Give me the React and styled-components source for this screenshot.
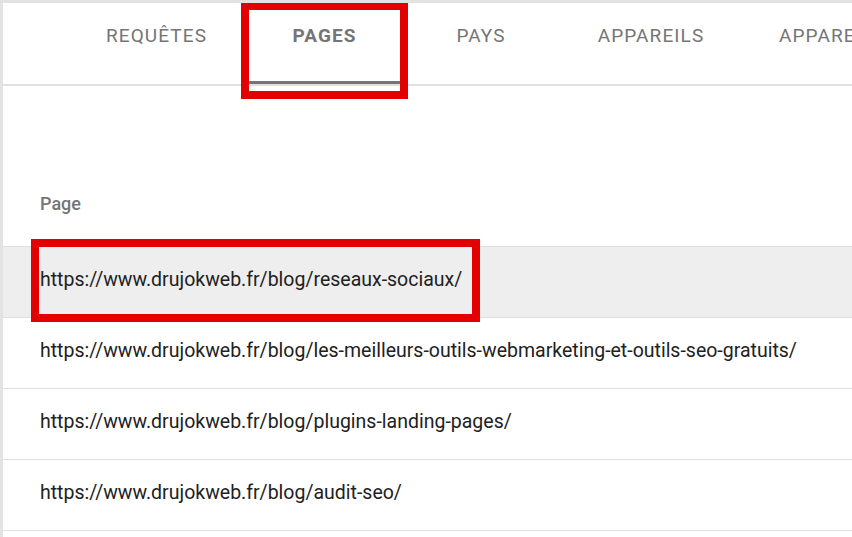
import React from 'react';
import styled, { createGlobalStyle } from 'styled-components';

const GlobalStyle = createGlobalStyle`
  html, body {
    margin: 0;
    padding: 0;
    background: #ffffff;
  }

  body {
    font-family: Roboto, 'Liberation Sans', Arial, sans-serif;
  }
`;

const colors = {
  line: '#e0e0e0',
  frame: '#e3e3e3',
  muted: '#757575',
  text: '#212121',
  hover: '#eeeeee',
  mark: '#e30000',
};

const Frame = styled.div`
  height: 537px;
  box-sizing: border-box;
  border-top: 3px solid ${colors.frame};
  border-left: 3px solid ${colors.frame};
  overflow: hidden;
`;

const TabBar = styled.div`
  display: flex;
  height: 81px;
  padding-left: 61px;
  border-bottom: 2px solid ${colors.line};
  white-space: nowrap;
`;

const Tab = styled.div`
  position: relative;
  flex: ${(p) => (p.$width ? `0 0 ${p.$width}px` : '0 0 auto')};
  display: flex;
  justify-content: center;
  align-items: flex-start;
  box-sizing: border-box;
  padding: 21px ${(p) => (p.$width ? 0 : 39)}px 0;
  font-size: 19px;
  line-height: 24px;
  font-weight: ${(p) => (p.$active ? 700 : 400)};
  letter-spacing: 1.1px;
  text-transform: uppercase;
  color: ${colors.muted};

  ${(p) =>
    p.$active &&
    `
    &::after {
      content: '';
      position: absolute;
      left: 0;
      right: 0;
      bottom: 0;
      height: 3px;
      background: ${colors.muted};
    }
  `}
`;

const Mark = styled.span`
  position: absolute;
  top: ${(p) => p.$top}px;
  right: ${(p) => p.$right}px;
  bottom: ${(p) => p.$bottom}px;
  left: ${(p) => p.$left}px;
  border: 8px solid ${colors.mark};
  pointer-events: none;
  z-index: 2;
`;

const Table = styled.div`
  display: flex;
  flex-direction: column;
`;

const HeaderRow = styled.div`
  height: 160px;
  display: flex;
  align-items: flex-end;
  box-sizing: border-box;
  padding: 0 0 32px 37px;
  font-size: 18px;
  line-height: 20px;
  font-weight: 500;
  color: ${colors.muted};
`;

const Row = styled.div`
  height: 71px;
  box-sizing: border-box;
  display: flex;
  align-items: flex-start;
  padding: 22px 0 0 37px;
  border-top: 1px solid ${colors.line};
  background: ${(p) => (p.$highlight ? colors.hover : '#ffffff')};

  &:last-child {
    height: 72px;
    border-bottom: 1px solid ${colors.line};
  }
`;

const Url = styled.span`
  position: relative;
  font-size: 19.5px;
  line-height: 22px;
  color: ${colors.text};
  white-space: nowrap;
`;

const tabs = [
  { label: 'Requêtes', width: 185 },
  { label: 'Pages', width: 151, active: true },
  { label: 'Pays', width: 162 },
  { label: 'Appareils', width: 178 },
  { label: 'Apparence dans les résultats de recherche' },
];

const pages = [
  'https://www.drujokweb.fr/blog/reseaux-sociaux/',
  'https://www.drujokweb.fr/blog/les-meilleurs-outils-webmarketing-et-outils-seo-gratuits/',
  'https://www.drujokweb.fr/blog/plugins-landing-pages/',
  'https://www.drujokweb.fr/blog/audit-seo/',
];

const App = () => (
  <>
    <GlobalStyle />
    <Frame>
      <TabBar>
        {tabs.map((tab) => (
          <Tab key={tab.label} $width={tab.width} $active={tab.active}>
            {tab.label}
            {tab.active && <Mark $top={-1} $right={-8} $bottom={-15} $left={-8} />}
          </Tab>
        ))}
      </TabBar>
      <Table>
        <HeaderRow>Page</HeaderRow>
        {pages.map((url, i) => (
          <Row key={url} $highlight={i === 0}>
            <Url>
              {url}
              {i === 0 && <Mark $top={-30} $right={-18} $bottom={-31} $left={-9} />}
            </Url>
          </Row>
        ))}
      </Table>
    </Frame>
  </>
);

export default App;
